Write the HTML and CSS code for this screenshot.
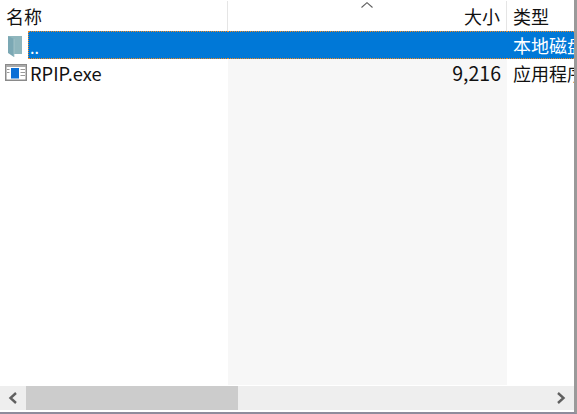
FILE: index.html
```html
<!DOCTYPE html>
<html lang="zh">
<head>
<meta charset="utf-8">
<title>RPIP</title>
<link rel="stylesheet" href="styles.css">
</head>
<body>
<div class="window">
  <div class="pane">
    <div class="columns header">
      <div class="cell name head-sep">名称</div>
      <div class="cell size head-sep">
        <svg class="sort" width="12" height="6" viewBox="0 0 12 6"><path d="M.5 5.500 6 .7l5.500 4.800" fill="none" stroke="#5f5f5f" stroke-width="1.100"/></svg>
        大小
      </div>
      <div class="cell type">类型</div>
    </div>
    <div class="columns row selected">
      <div class="cell name">
        <svg class="icon" width="15" height="22" viewBox="0 0 15 22"><path d="M0 0h14v18H6v-1z" fill="#8fb6bd"/><path d="M0 0l6 3v18l-6-4z" fill="#7ba8b4"/><path d="M6 3v18" stroke="#a9c9ce" stroke-width=".8"/></svg>
        <span class="focus">..</span>
      </div>
      <div class="cell size"></div>
      <div class="cell type">本地磁盘</div>
    </div>
    <div class="columns row plain">
      <div class="cell name">
        <svg class="icon" width="22" height="17" viewBox="0 0 22 17"><rect x=".75" y=".75" width="20.500" height="15.500" fill="#fff" stroke="#8a8a8a" stroke-width="1.500"/><rect x="1" y="1" width="20" height="2" fill="#a9a9a9"/><rect x="6" y="4" width="8" height="10.500" fill="#0a6fd6"/><path d="M2 5.500h2.500M2 8.500h2.500M15.500 5.500h4.500M15.500 8.500h4.500M15.500 11.500h4.500" stroke="#9a9a9a"/></svg>
        <span class="label">RPIP.exe</span>
      </div>
      <div class="cell size"><span class="num">9,216</span></div>
      <div class="cell type">应用程序</div>
    </div>
    <div class="columns filler">
      <div class="cell name"></div>
      <div class="cell size"></div>
      <div class="cell type"></div>
    </div>
    <div class="scrollbar">
      <div class="arrow">
        <svg width="10" height="12" viewBox="0 0 10 12"><path d="M8 1 2.500 6 8 11" fill="none" stroke="#606060" stroke-width="2.400"/></svg>
      </div>
      <div class="track"><div class="thumb"></div></div>
      <div class="arrow">
        <svg width="10" height="12" viewBox="0 0 10 12"><path d="M2 1l5.500 5L2 11" fill="none" stroke="#606060" stroke-width="2.400"/></svg>
      </div>
    </div>
  </div>
</div>
</body>
</html>
```

FILE: styles.css
```css
* { box-sizing: border-box; }
html, body {
  margin: 0;
  height: 100%;
  background: #fff;
  overflow: hidden;
}
body {
  font-family: "Noto Sans CJK SC", "Noto Sans", sans-serif;
  font-size: 18px;
  color: #111;
}
.window {
  width: 577px;
  height: 414px;
  border-right: 3px solid #9a9a9a;
  border-bottom: 2px solid #8f8c9c;
  overflow: hidden;
}
.pane {
  display: flex;
  flex-direction: column;
  height: 100%;
}
.columns {
  display: grid;
  grid-template-columns: 228px 279px 1fr;
}
.cell {
  display: flex;
  align-items: center;
  white-space: nowrap;
  overflow: hidden;
  min-width: 0;
}
.size {
  justify-content: flex-end;
  padding-right: 6px;
  position: relative;
}
.type {
  padding-left: 6px;
}
.header {
  height: 31px;
  flex: none;
  padding-top: 1px;
}
.header .name { padding-left: 6px; }
.head-sep { border-right: 1px solid #e5e5e5; }
.sort {
  position: absolute;
  left: 133px;
  top: 1px;
}
.row {
  height: 28px;
  flex: none;
}
.plain .cell { padding-bottom: 1px; }
.row .size { background: #f7f7f7; }
.row .name { padding-left: 5px; gap: 3px; }
.icon { flex: none; }
.label {
  font-size: 18.3px;
  line-height: 28px;
}
.num { font-size: 19.500px; }
.selected {
  background: #0078d7;
  color: #fff;
}
.selected .size { background: transparent; }
.selected .name {
  padding-left: 0;
  gap: 0;
  background: #fff;
}
.selected .icon { margin: 3px 5px 0 8px; }
.focus {
  flex: 1;
  align-self: stretch;
  background: #0078d7;
  line-height: 30px;
  font-size: 16px;
  padding-left: 1px;
  border-left: 1px dotted #f08a24;
  border-top: 1px dotted #f08a24;
  border-bottom: 1px dotted #f08a24;
}
.selected .size, .selected .type {
  border-top: 1px dotted #f08a24;
  border-bottom: 1px dotted #f08a24;
}
.filler {
  flex: 1;
  min-height: 0;
}
.filler .size { background: #f7f7f7; }
.scrollbar {
  flex: none;
  height: 24px;
  margin-bottom: 2px;
  margin-top: 1px;
  display: flex;
  background: #eeeeee;
}
.arrow {
  flex: none;
  width: 26px;
  display: flex;
  align-items: center;
  justify-content: center;
}
.track {
  flex: 1;
  display: flex;
}
.thumb {
  width: 212px;
  background: #cccccc;
}
```
